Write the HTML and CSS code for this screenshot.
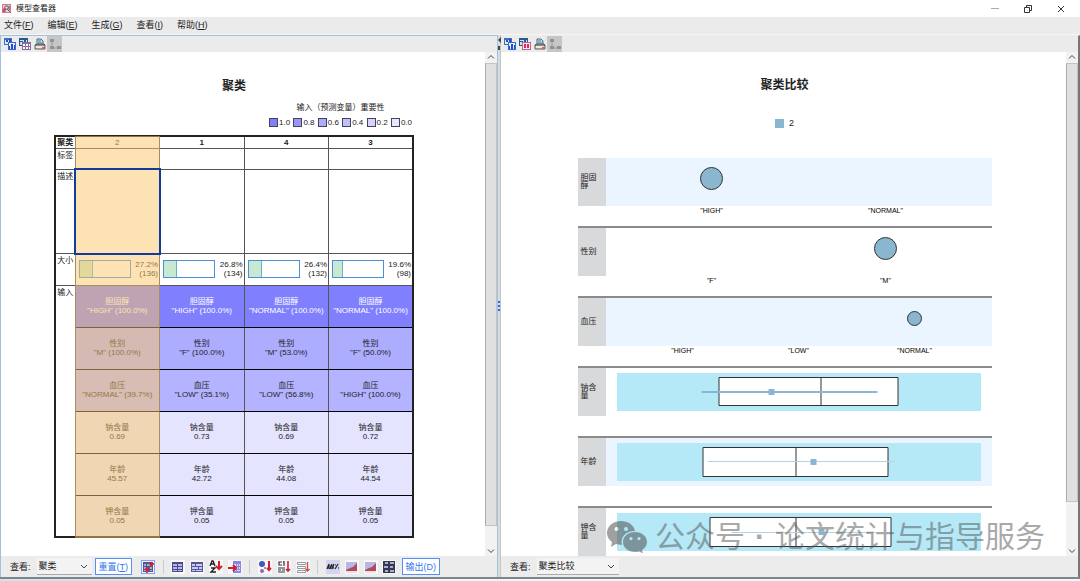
FILE: index.html
```html
<!DOCTYPE html>
<html>
<head>
  <meta charset="utf-8">
  <meta name="viewport" content="width=device-width, initial-scale=1">
  <title>模型查看器</title>
  <link rel="stylesheet" href="styles.css">
</head>
<body>
  <svg class="sprite" aria-hidden="true">
    <symbol id="i-chart" viewBox="0 0 12 12">
      <path d="M0 0h8v7H0z" fill="#3f6fc4" />
      <path d="M1 2h6v4H1z" fill="#dce8fb" />
      <path d="M2 2h2v2H2zM5 1h2v3H5z" fill="#2450b4" />
      <path d="M4 4h8v8H4z" fill="#3b66c8" />
      <path d="M5 5h6v6H5z" fill="#e6edff" />
      <path d="M5 8h1v3H5zM7 6h2v5H7zM10 7h1v4h-1z" fill="#2348d0" />
    </symbol>
    <symbol id="i-table" viewBox="0 0 12 12">
      <path d="M0 0h9v8H0z" fill="#285a86" />
      <path d="M1 2h7v5H1z" fill="#cfe2f3" />
      <path d="M1 3h3v1H1zM5 2h2v2H5z" fill="#285a86" />
      <path d="M3 4h9v8H3z" fill="#8a6c9e" />
      <path d="M4 6h2v2H4zM7 6h2v2H7zM10 6h1v2h-1zM4 9h2v2H4zM7 9h2v2H7zM10 9h1v2h-1z" fill="#fff" />
    </symbol>
    <symbol id="i-table-red" viewBox="0 0 12 12">
      <path d="M0 0h9v8H0z" fill="#285a86" />
      <path d="M1 2h7v5H1z" fill="#cfe2f3" />
      <path d="M1 3h3v1H1zM5 2h2v2H5z" fill="#285a86" />
      <path d="M3 4h9v8H3z" fill="#b06a92" />
      <path d="M4 5h7v6H4z" fill="#ffe6ee" />
      <path d="M5 6h2v4H5zM8 6h2v4H8z" fill="#e0245e" />
    </symbol>
    <symbol id="i-print" viewBox="0 0 12 12">
      <path d="M3 6V1h4l2 2v3" fill="#c4e0ee" stroke="#3f6880" />
      <path d="M4 3h3M4 5h4" stroke="#4d7b98" />
      <path d="M1 7l2-1h7l1 1v4H1z" fill="#d6d2c8" stroke="#5c605e" />
      <path d="M1 7h10" stroke="#444" />
      <path d="M2 9h7" stroke="#fff" />
      <path d="M8 9h3v2H8z" fill="#d9644c" />
    </symbol>
    <symbol id="i-tree" viewBox="0 0 12 12">
      <path d="M3 2v8h7" fill="none" stroke="#9a9a9a" />
      <path d="M1 1h4v3H1zM1 8h4v3H1zM8 8h4v3H8z" fill="#929292" />
    </symbol>
    <symbol id="i-reset" viewBox="0 0 14 14">
      <path d="M0 0h14v14H0z" fill="#7fa3f5" />
      <path d="M1 1h12v12H1z" fill="#f2f2fd" />
      <path d="M2 2h10v10H2z" fill="#55578c" />
      <path d="M3 4h2v2H3zM6 4h3v2H6zM3 7h2v2H3zM3 10h2v1H3zM9 10h2v1H9zM9 7h2v2H9z" fill="#a7a8ee" />
      <path d="M13 4H9M11 2L9 4l2 2M6 13V9M4 10l2-2 2 2" fill="none" stroke="#d5202c" stroke-width="1.6" />
    </symbol>
    <symbol id="i-grid" viewBox="0 0 14 14">
      <path d="M1 2h11v10H1z" fill="#4a4c7e" />
      <path d="M2 4h4v2H2zM7 4h4v2H7zM2 7h4v2H2zM7 7h4v2H7zM2 10h4v1H2zM7 10h4v1H7z" fill="#b4b5f8" />
    </symbol>
    <symbol id="i-grid-mix" viewBox="0 0 14 14">
      <path d="M1 2h12v10H1z" fill="#565890" />
      <path d="M2 4h3v2H2zM6 4h6v2H6zM2 7h6v2H2zM9 7h3v2H9zM2 10h3v1H2zM6 10h6v1H6z" fill="#c9caff" />
    </symbol>
    <symbol id="i-sort-name" viewBox="0 0 14 14">
      <path d="M1 6l2-5h1l2 5M2 4h3M2 8h4L2 12h5" fill="none" stroke="#222" stroke-width="1.4" />
      <path d="M10 1v8M7 6l3 3 3-3" fill="none" stroke="#d5202c" stroke-width="2" />
    </symbol>
    <symbol id="i-insert" viewBox="0 0 14 14">
      <path d="M5 1h8v12H5z" fill="#8587e0" />
      <path d="M6 4h2v2H6zM9 4h1v2H9zM11 4h1v2h-1zM9 7h1v2H9zM11 7h1v2h-1zM6 10h2v1H6zM9 10h3v1H9z" fill="#dcdcff" />
      <path d="M0 8h7M5 5l3 3-3 3" fill="none" stroke="#d5202c" stroke-width="2" />
    </symbol>
    <symbol id="i-sort-size" viewBox="0 0 14 14">
      <circle cx="4" cy="4" r="3" fill="#3c5cbc" />
      <circle cx="4" cy="11" r="2" fill="#9a62b8" />
      <circle cx="7" cy="8" r="1" fill="#777" />
      <path d="M11 1v9M9 8l2 2 2-2" fill="none" stroke="#d5202c" stroke-width="2" />
    </symbol>
    <symbol id="i-sort-label" viewBox="0 0 14 14">
      <path d="M5 2H2v3h3M7 1v5M6 2h1M1 8h7M1 10h3M5 10h3M1 12h7" fill="none" stroke="#333" stroke-width="1.2" />
      <path d="M11 1v10M9 9l2 2 2-2" fill="none" stroke="#d5202c" stroke-width="1.6" />
    </symbol>
    <symbol id="i-sort-list" viewBox="0 0 14 14">
      <path d="M1.500 2.500h8v2h-8zM1.500 6.500h8v2h-8zM1.500 10.500h8v2h-8z" fill="#fff" stroke="#999" />
      <path d="M11.500 2v9M9.500 9l2 2 2-2" fill="none" stroke="#c8505a" stroke-width="1.4" />
    </symbol>
    <symbol id="i-percent" viewBox="0 0 14 14">
      <path d="M0 0h14v14H0z" fill="#d3d4f2" />
      <path d="M1 9l2-5v5M4 9l2-5M6 9l2-5M4 6h4M4 8h4M9 9l3-5M9 5h1M12 8h1" fill="none" stroke="#222" stroke-width="1.2" />
    </symbol>
    <symbol id="i-area" viewBox="0 0 14 14">
      <path d="M1 2h11v11H1z" fill="#b9b6e6" />
      <path d="M1 10l4-2 3-1 4-4v8H1z" fill="#b04a5c" />
      <path d="M1 11h11v2H1z" fill="#f2dfe6" />
    </symbol>
    <symbol id="i-cells" viewBox="0 0 14 14">
      <path d="M1 1h12v12H1z" fill="#35384e" />
      <path d="M3 2h3v2H3zM8 2h4v2H8zM2 6h4v2H2zM8 6h3v2H8zM3 10h3v2H3zM8 10h4v2H8z" fill="#a9b0d8" />
    </symbol>
    <symbol id="i-down" viewBox="0 0 8 8"><path d="M1 3l3 3 3-3" fill="none" stroke="#444" /></symbol>
    <symbol id="i-up" viewBox="0 0 8 8"><path d="M1 5l3-3 3 3" fill="none" stroke="#444" /></symbol>
  </svg>

  <header class="titlebar">
    <svg class="app-icon" viewBox="0 0 10 10">
      <path d="M0 0h10v10H0z" fill="#d8707e" />
      <path d="M1 1h8v8H1z" fill="#f0d3da" />
      <path d="M1 5h3v4H1z" fill="#cf4a5e" />
      <circle cx="5" cy="4" r="2" fill="none" stroke="#43405c" />
      <path d="M6 6l3 3M8 2v5" stroke="#4c4866" />
    </svg>
    <span class="title">模型查看器</span>
    <button class="win-btn" aria-label="最小化"><svg viewBox="0 0 8 8"><path d="M0 3.500h8" stroke="#aaa" /></svg></button>
    <button class="win-btn" aria-label="还原"><svg viewBox="0 0 8 8"><path d="M.5 2.500h5v5h-5zM2.500 2V.5h5v5H6" fill="none" stroke="#333" /></svg></button>
    <button class="win-btn" aria-label="关闭"><svg viewBox="0 0 8 8"><path d="M1 1l6 6M7 1L1 7" stroke="#333" /></svg></button>
  </header>

  <nav class="menubar">
    <button>文件(<u>F</u>)</button>
    <button>编辑(<u>E</u>)</button>
    <button>生成(<u>G</u>)</button>
    <button>查看(<u>I</u>)</button>
    <button>帮助(<u>H</u>)</button>
  </nav>

  <main class="split">
    <section class="panel panel-left">
      <div class="toolbar">
        <button aria-label="复制"><svg><use href="#i-chart" /></svg></button>
        <button aria-label="复制表"><svg><use href="#i-table" /></svg></button>
        <button aria-label="打印"><svg><use href="#i-print" /></svg></button>
        <button class="off" aria-label="浏览" disabled><svg><use href="#i-tree" /></svg></button>
      </div>
      <div class="view">
        <div class="clusters">
          <h2>聚类</h2>
          <div class="legend">
            <div>输入（预测变量）重要性</div>
            <ul>
              <li><i class="v10"></i>1.0</li>
              <li><i class="v8"></i>0.8</li>
              <li><i class="v6"></i>0.6</li>
              <li><i class="v4"></i>0.4</li>
              <li><i class="v2"></i>0.2</li>
              <li><i class="v0"></i>0.0</li>
            </ul>
          </div>
          <div class="table-wrap">
            <table>
              <thead>
                <tr class="r-head"><th>聚类</th><th class="picked">2</th><th>1</th><th>4</th><th>3</th></tr>
              </thead>
              <tbody>
                <tr class="r-label"><th>标签</th><td></td><td></td><td></td><td></td></tr>
                <tr class="r-desc"><th>描述</th><td class="focus"></td><td></td><td></td><td></td></tr>
                <tr class="r-size">
                  <th>大小</th>
                  <td><div class="size"><span class="bar"><b style="width:27.2%"></b></span><span>27.2%<br>(136)</span></div></td>
                  <td><div class="size"><span class="bar"><b style="width:26.8%"></b></span><span>26.8%<br>(134)</span></div></td>
                  <td><div class="size"><span class="bar"><b style="width:26.4%"></b></span><span>26.4%<br>(132)</span></div></td>
                  <td><div class="size"><span class="bar"><b style="width:19.6%"></b></span><span>19.6%<br>(98)</span></div></td>
                </tr>
                <tr class="r-input top">
                  <th rowspan="6">输入</th>
                  <td>胆固醇<br>"HIGH" (100.0%)</td><td>胆固醇<br>"HIGH" (100.0%)</td><td>胆固醇<br>"NORMAL" (100.0%)</td><td>胆固醇<br>"NORMAL" (100.0%)</td>
                </tr>
                <tr class="r-input mid">
                  <td>性别<br>"M" (100.0%)</td><td>性别<br>"F" (100.0%)</td><td>性别<br>"M" (53.0%)</td><td>性别<br>"F" (50.0%)</td>
                </tr>
                <tr class="r-input mid2">
                  <td>血压<br>"NORMAL" (39.7%)</td><td>血压<br>"LOW" (35.1%)</td><td>血压<br>"LOW" (56.8%)</td><td>血压<br>"HIGH" (100.0%)</td>
                </tr>
                <tr class="r-input">
                  <td>钠含量<br>0.69</td><td>钠含量<br>0.73</td><td>钠含量<br>0.69</td><td>钠含量<br>0.72</td>
                </tr>
                <tr class="r-input">
                  <td>年龄<br>45.57</td><td>年龄<br>42.72</td><td>年龄<br>44.08</td><td>年龄<br>44.54</td>
                </tr>
                <tr class="r-input">
                  <td>钾含量<br>0.05</td><td>钾含量<br>0.05</td><td>钾含量<br>0.05</td><td>钾含量<br>0.05</td>
                </tr>
              </tbody>
            </table>
            <div class="col-highlight"></div>
          </div>
        </div>
        <div class="scrollbar">
          <svg><use href="#i-up" /></svg>
          <div class="track"><div class="thumb"></div></div>
          <svg><use href="#i-down" /></svg>
        </div>
      </div>
      <div class="footer">
        <label for="view-left">查看:</label>
        <span class="combo">
          <select id="view-left"><option>聚类</option></select>
          <svg><use href="#i-down" /></svg>
        </span>
        <button class="text-btn">重置(<u>T</u>)</button>
        <div class="tools">
          <button aria-label="转置"><svg><use href="#i-reset" /></svg></button>
          <hr>
          <button aria-label="单元格分布"><svg><use href="#i-grid" /></svg></button>
          <button aria-label="按重要性"><svg><use href="#i-grid-mix" /></svg></button>
          <button aria-label="按名称排序"><svg><use href="#i-sort-name" /></svg></button>
          <button aria-label="按数据顺序"><svg><use href="#i-insert" /></svg></button>
          <hr>
          <button aria-label="聚类按大小"><svg><use href="#i-sort-size" /></svg></button>
          <button aria-label="聚类按名称"><svg><use href="#i-sort-label" /></svg></button>
          <button aria-label="聚类按标签"><svg><use href="#i-sort-list" /></svg></button>
          <hr>
          <button aria-label="显示百分比"><svg><use href="#i-percent" /></svg></button>
          <button aria-label="绝对分布"><svg><use href="#i-area" /></svg></button>
          <button aria-label="相对分布"><svg><use href="#i-area" /></svg></button>
          <button aria-label="基本视图"><svg><use href="#i-cells" /></svg></button>
        </div>
        <button class="text-btn">输出(D)</button>
      </div>
    </section>

    <div class="divider">
      <svg class="collapse" viewBox="0 0 3 14"><path d="M3 0v6L0 3zM0 9h2v4H0" fill="#444" /></svg>
      <svg class="grip" viewBox="0 0 3 11"><path d="M0 0h2v2H0zM0 4h2v2H0zM0 8h2v2H0z" fill="#1e6cff" /></svg>
    </div>

    <section class="panel panel-right">
      <div class="toolbar">
        <button aria-label="复制"><svg><use href="#i-chart" /></svg></button>
        <button aria-label="复制表"><svg><use href="#i-table-red" /></svg></button>
        <button aria-label="打印"><svg><use href="#i-print" /></svg></button>
        <button class="off" aria-label="浏览" disabled><svg><use href="#i-tree" /></svg></button>
      </div>
      <div class="view">
        <div class="compare">
          <h2>聚类比较</h2>
          <div class="key"><i></i>2</div>
          <div class="row tint">
            <div class="name">胆固醇</div>
            <div class="plot"><span><i class="dot"></i></span><span></span></div>
            <div class="axis"><span>"HIGH"</span><span>"NORMAL"</span></div>
          </div>
          <div class="row">
            <div class="name">性别</div>
            <div class="plot"><span></span><span><i class="dot"></i></span></div>
            <div class="axis"><span>"F"</span><span>"M"</span></div>
          </div>
          <div class="row tint">
            <div class="name">血压</div>
            <div class="plot"><span></span><span></span><span><i class="dot small"></i></span></div>
            <div class="axis"><span>"HIGH"</span><span>"LOW"</span><span>"NORMAL"</span></div>
          </div>
          <div class="row">
            <div class="name">钠含量</div>
            <div class="plot box">
              <svg viewBox="0 0 363 38">
                <path class="quart" d="M101.500 4.500h179v28h-179zM203.500 4.500v28" />
                <path class="range" d="M84 19h176" />
                <path class="mark" d="M151 16h6v6h-6z" />
              </svg>
            </div>
          </div>
          <div class="row tint">
            <div class="name">年龄</div>
            <div class="plot box">
              <svg viewBox="0 0 363 38">
                <path class="quart" d="M85.500 4.500h185v29h-185zM178.500 4.500v29" />
                <path class="range thin" d="M90 18.500h187" />
                <path class="mark" d="M193 16h6v6h-6z" />
              </svg>
            </div>
          </div>
          <div class="row">
            <div class="name">钾含量</div>
            <div class="plot box">
              <svg viewBox="0 0 363 38">
                <path class="quart" d="M92.500 4.500h181v29h-181zM178.500 4.500v29" />
                <path class="range thin" d="M114 19.500h144" />
                <path class="mark" d="M201 16h6v6h-6z" />
              </svg>
            </div>
          </div>
        </div>
        <div class="scrollbar">
          <svg><use href="#i-up" /></svg>
          <div class="track"><div class="thumb short"></div></div>
          <svg><use href="#i-down" /></svg>
        </div>
      </div>
      <div class="footer">
        <label for="view-right">查看:</label>
        <span class="combo wide">
          <select id="view-right"><option>聚类比较</option></select>
          <svg><use href="#i-down" /></svg>
        </span>
      </div>
      <div class="watermark">
        <svg viewBox="0 0 40 32">
          <path fill-rule="evenodd" d="M14 0C6 0 0 5.500 0 12c0 4 2 7 5 9l-1 5 5-3c2 .6 4 .8 6 .7C13 16 19 10 28 10 27 4 21 0 14 0zM9.500 6a2 2 0 1 1 0 4 2 2 0 0 1 0-4zM19 6a2 2 0 1 1 0 4 2 2 0 0 1 0-4z" />
          <path fill-rule="evenodd" d="M28 11c-7 0-12 4.500-12 10s5 10 12 10c1.500 0 3-.2 4-.6l4 2-1-3.400c3-2 5-4.600 5-8 0-5.500-5-10-12-10zM24 16a1.600 1.600 0 1 1 0 3.200 1.600 1.600 0 0 1 0-3.200zM32 16a1.600 1.600 0 1 1 0 3.200 1.600 1.600 0 0 1 0-3.200z" />
        </svg>
        <span>公众号</span><b>·</b><span>论文统计与指导服务</span>
      </div>
    </section>
  </main>
</body>
</html>
```
FILE: styles.css
```css
* {
  box-sizing: border-box;
}
body {
  margin: 0;
  height: 100vh;
  display: flex;
  flex-direction: column;
  overflow: hidden;
  padding-bottom: 2px;
  background: linear-gradient(90deg, #d3e3ea 22%, #eef5f8 26%, #f4f6f8);
  font: 9px/12px "Liberation Sans", "Noto Sans CJK SC", sans-serif;
  color: #222;
}
button,
select {
  font: inherit;
  color: inherit;
  border: 0;
  padding: 0;
  margin: 0;
  background: none;
}
h2 {
  margin: 0;
  font-size: 12px;
  line-height: 16px;
  text-align: center;
}
.sprite {
  position: absolute;
  width: 0;
  height: 0;
}

.titlebar {
  display: flex;
  align-items: center;
  height: 17px;
  padding: 0 11px 0 2px;
  background: #fff;
  font-size: 8px;
}
.app-icon {
  width: 9px;
  height: 9px;
  margin-right: 5px;
}
.title {
  flex: 1;
}
.win-btn {
  display: grid;
  place-items: center;
  width: 16px;
  height: 16px;
  margin-left: 17px;

  svg {
    width: 8px;
    height: 8px;
  }
}
.menubar {
  display: flex;
  gap: 14px;
  height: 18px;
  padding: 0 0 1px 4px;
  background: #ebebeb;
  border-bottom: 1px solid #f5f5f5;
}

.split {
  flex: 1;
  min-height: 0;
  display: grid;
  grid-template-columns: minmax(0, 498fr) 3px minmax(0, 579fr);
  border-bottom: 2px solid #7f858c;
  background: #ebebeb;
}
.panel {
  position: relative;
  display: flex;
  flex-direction: column;
  min-height: 0;
}
.panel-left {
  border: 1px solid #9fc3df;
  border-bottom: 0;
}
.panel-right {
  border-top: 1px solid #ebebeb;
  border-right: 2px solid #777;
}
.toolbar {
  display: flex;
  height: 16px;
  padding-left: 1px;
  background: #ebebeb;

  button {
    width: 15px;
    height: 16px;
    display: grid;
    place-items: center;
  }

  svg {
    width: 12px;
    height: 12px;
  }

  .off {
    background: #c6c6c6;
  }
}
.view {
  flex: 1;
  min-height: 0;
  display: flex;
  background: #fff;
  overflow: hidden;
}

.clusters {
  flex: 1;
  display: flex;
  flex-direction: column;
  padding: 26px 0 0 53px;
  font-size: 8px;
  line-height: 9px;

  h2 {
    width: 360px;
  }
}
.legend {
  width: 360px;
  padding: 9px 2px 0 215px;
  text-align: center;
  white-space: nowrap;

  ul {
    display: flex;
    justify-content: space-between;
    margin: 6px 0 8px;
    padding: 0;
    list-style: none;
  }

  li {
    display: flex;
    gap: 1px;
  }

  i {
    width: 9px;
    height: 9px;
    border: 1px solid #445;
  }
}
.v10 { background: #8080ff; }
.v8 { background: #9797ff; }
.v6 { background: #adadff; }
.v4 { background: #c0c0ff; }
.v2 { background: #d4d4ff; }
.v0 { background: #e6e6ff; }

.table-wrap {
  position: relative;
  width: 360px;
}
table {
  width: 100%;
  table-layout: fixed;
  border-collapse: collapse;
  border: 2px solid #222;
}
th,
td {
  padding: 0;
  border: 1px solid #555;
  text-align: center;
  white-space: nowrap;
}
th:first-child {
  width: 20px;
}
tbody th {
  font-weight: normal;
  vertical-align: top;
  padding-top: 2px;
}
.picked {
  font-weight: normal;
}
.r-head { height: 12px; }
.r-label { height: 21px; }
.r-desc { height: 84px; }
.r-size { height: 32px; }
.r-input {
  height: 42px;

  td {
    background: #e4e4ff;
    border-top-color: #000;
    border-bottom-color: #000;
  }

  &.top td {
    background: #8080ff;
    color: #fff;
  }

  &.mid td {
    background: #adadff;
  }

  &.mid2 td {
    background: #b3b3ff;
  }
}
.size {
  display: flex;
  justify-content: space-between;
  align-items: center;
  padding: 0 1px 0 3px;
  text-align: right;
}
.bar {
  width: 52px;
  height: 18px;
  border: 1px solid #4a90d9;
  background: #fff;

  b {
    display: block;
    height: 100%;
    background: #c8e8cf;
    border-right: 1px solid #6aaed0;
  }
}
.col-highlight {
  position: absolute;
  top: 1px;
  bottom: 0;
  left: 21px;
  width: 85px;
  background: rgba(251, 199, 103, 0.5);
}
.focus {
  position: relative;

  &::after {
    content: "";
    position: absolute;
    inset: -2px;
    border: 2px solid #103c9c;
    z-index: 1;
  }
}

.scrollbar {
  display: flex;
  flex-direction: column;
  align-items: center;
  width: 12px;
  background: #f2f2f2;

  svg {
    width: 8px;
    height: 11px;
  }
}
.track {
  flex: 1;
  width: 100%;
}
.thumb {
  height: 96%;
  background: #e0e0e0;
  border: 1px solid #c4c4c4;
  border-left-color: #aaa;

  &.short {
    height: 91%;
  }
}

.footer {
  display: flex;
  align-items: center;
  height: 21px;
  padding-left: 9px;
  background: #ececec;
}
.combo {
  display: flex;
  align-items: center;
  width: 55px;
  height: 17px;
  margin: 0 3px 0 6px;
  padding: 0 4px 0 2px;
  border-bottom: 1px solid #aaa;
  background: #f3f3f3;

  &.wide {
    width: 82px;
  }

  select {
    flex: 1;
    min-width: 0;
    appearance: none;
  }

  svg {
    width: 8px;
    height: 8px;
  }
}
.text-btn {
  height: 17px;
  padding: 0 3px;
  border: 1px solid #5590f0;
  background: #fff;
  color: #3377ee;
  white-space: nowrap;
}
.tools {
  flex: 1;
  display: flex;
  align-items: center;
  justify-content: space-between;
  margin: 0 5px 0 9px;

  button {
    width: 14px;
    height: 14px;
    background: #f8f8fc;
  }

  svg {
    display: block;
    width: 14px;
    height: 14px;
  }

  hr {
    width: 1px;
    height: 14px;
    margin: 0 3px;
    border: 0;
    background: #ccc;
  }

  & + .text-btn {
    margin-right: 57px;
  }
}

.divider {
  position: relative;
  background: #dcdcdc;
  border-right: 1px solid #c4c4c4;

  svg {
    position: absolute;
    left: 0;
    width: 3px;
  }
}
.collapse {
  top: 2px;
  height: 14px;
}
.grip {
  top: 49%;
  height: 11px;
}

.compare {
  flex: 1;
  display: flex;
  flex-direction: column;
  align-items: center;
  padding: 25px 0 0 2px;
}
.key {
  display: flex;
  align-items: center;
  gap: 5px;
  height: 12px;
  margin: 24px 0 29px;

  i {
    width: 9px;
    height: 9px;
    background: #8ab6d0;
  }
}
.row {
  flex: none;
  display: grid;
  grid-template: 48px 20px / 28px 1fr;
  width: 98%;
  max-width: 414px;
  border-bottom: 2px solid #8c8a8a;

  &.tint .plot {
    background-color: #eaf5ff;
  }
}
.name {
  display: grid;
  align-items: center;
  padding: 0 9px 0 3px;
  background: #d8d9db;
  font-size: 8px;
  line-height: 8px;
}
.plot,
.axis {
  display: grid;
  grid-auto-flow: column;
  grid-auto-columns: 1fr;
  justify-items: center;
  padding: 0 19px;
}
.axis {
  grid-column: 2;
  font-size: 7px;
  line-height: 9px;
  color: #000;
}
.plot span {
  height: 40px;
  display: grid;
  place-items: center;
}
.dot {
  width: 23px;
  height: 23px;
  border: 1px solid #333;
  border-radius: 50%;
  background: #8ab6d0;

  &.small {
    width: 15px;
    height: 15px;
  }
}
.plot.box {
  padding: 5px 11px;

  svg {
    width: 100%;
    height: 38px;
    background: #b5e9f7;
  }
}
.quart {
  fill: #fff;
  stroke: #333;
}
.range {
  stroke: #8ab6d0;
  stroke-width: 2;

  &.thin {
    stroke: #b4d2e2;
    stroke-width: 1;
  }
}
.mark {
  fill: #8ab6d0;
}

.watermark {
  position: absolute;
  right: 33px;
  bottom: 24px;
  display: flex;
  align-items: center;
  font-size: 30px;
  line-height: 32px;
  color: #555;
  opacity: 0.5;
  white-space: nowrap;

  svg {
    width: 40px;
    height: 32px;
    margin-right: 8px;
    fill: #444;
  }

  b {
    width: 30px;
    text-align: center;
  }
}
```
